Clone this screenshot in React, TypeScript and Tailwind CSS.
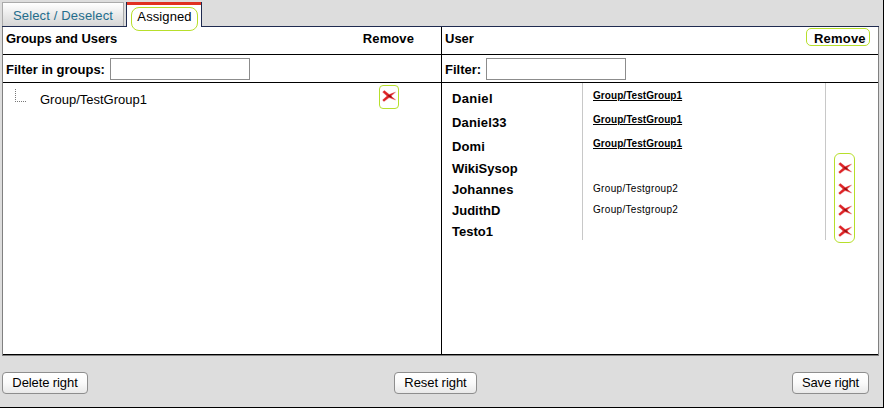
import React from 'react';

function RemoveIcon() {
  return (
    <svg width="14" height="12" viewBox="0 0 14 12" className="block shrink-0">
      <path d="M0 2.2 2.3 0 7.3 3.9 13.8 1.4 14 2.6 9.6 6.2 14 9.4 13.6 10.6 7.2 8.3 2 12 0 10 4.4 6Z" fill="#e99a9a" opacity="0.6" />
      <path d="M0.7 1.9 2.4 0.6 7.2 4.5 13.3 1.9 9 6.1 13.6 9.9 7.1 7.6 1.9 11.5 0.6 9.9 5 6Z" fill="#de2326" />
      <path d="M5.8 5 8.2 5.2 10.4 7.6 6.8 6.9Z" fill="#8f1012" />
    </svg>
  );
}

const users = [
  { name: 'Daniel', group: 'Group/TestGroup1', inherited: true, tracking: 'tracking-[0.3px]' },
  { name: 'Daniel33', group: 'Group/TestGroup1', inherited: true, tracking: 'tracking-[0.15px]' },
  { name: 'Domi', group: 'Group/TestGroup1', inherited: true, tracking: 'tracking-[0.1px]' },
  { name: 'WikiSysop', group: '', inherited: false, tracking: 'tracking-normal' },
  { name: 'Johannes', group: 'Group/Testgroup2', inherited: false, tracking: 'tracking-[0.1px]' },
  { name: 'JudithD', group: 'Group/Testgroup2', inherited: false, tracking: 'tracking-normal' },
  { name: 'Testo1', group: '', inherited: false, tracking: 'tracking-normal' },
];

function ActionButton({ label, size }: { label: string; size: string }) {
  return (
    <button
      className={`h-[22px] rounded-[4px] border border-[#8e8e8e] bg-linear-to-b from-white via-[#fafafa] to-[#e9e9e9] text-[13px] leading-[20px] text-black whitespace-nowrap ${size}`}
    >
      {label}
    </button>
  );
}

export default function App() {
  return (
    <div className="h-[410px] w-[885px] overflow-hidden bg-white font-['Liberation_Sans',Arial,sans-serif] text-[13px] text-black">
      <div className="h-[408px] w-[884px] border-r border-b border-black bg-[#dddddd] pl-[2px]">
        <div className="flex h-[27px] items-end">
          <div className="flex h-[27px] w-[124px] flex-col border-b border-[#1f2b50] pt-[2px]">
            <button className="h-[24px] w-[122px] border border-b-0 border-[#aaaaaa] bg-linear-to-b from-white to-[#d6d6d6] pt-[3px] pl-[10px] text-left leading-[18px] tracking-[0.15px] whitespace-nowrap text-[#246d8c]">
              Select / Deselect
            </button>
          </div>
          <button className="flex h-[25px] w-[76px] flex-col border-x border-[#1f2b50] bg-white">
            <span className="h-[3px] w-full shrink-0 bg-[#e03120]" />
            <span className="mt-[2px] ml-[4px] flex h-[24px] w-[67px] shrink-0 justify-center rounded-[8px] border border-[#b7df2b] leading-[17px] tracking-[0.1px]">
              Assigned
            </span>
          </button>
          <div className="h-full w-[677px] border-b border-[#1f2b50]" />
        </div>

        <div className="flex h-[329px] w-[877px] border-x border-b border-[#808080] bg-white">
          <section className="flex w-[439px] flex-col border-r border-b border-black">
            <header className="flex h-[28px] shrink-0 justify-between border-b border-black pt-[3px] pr-[27px] pl-[3px] leading-[18px] font-bold">
              <span className="tracking-[-0.1px]">Groups and Users</span>
              <span className="tracking-[0.1px]">Remove</span>
            </header>
            <div className="flex h-[28px] shrink-0 items-center border-b border-black pl-[3px] font-bold">
              <label className="w-[104px] pt-[2px] whitespace-nowrap">Filter in groups:</label>
              <input className="h-[22px] w-[140px] border border-[#8c8c8c] bg-white" />
            </div>
            <div className="flex pt-[2px] pl-[12px]">
              <span className="mt-[4px] h-[13px] w-[11px] border-b border-l border-dotted border-[#777777]" />
              <span className="mt-[6px] ml-[14px] w-[339px] leading-[18px]">Group/TestGroup1</span>
              <span className="flex h-[24px] w-[20px] justify-center rounded-[4px] border border-[#b7df2b] pt-[4px]">
                <RemoveIcon />
              </span>
            </div>
          </section>

          <section className="flex w-[436px] flex-col border-b border-black">
            <header className="flex h-[28px] shrink-0 justify-between border-b border-black pr-[8px] pl-[3px] leading-[18px] font-bold">
              <span className="pt-[3px]">User</span>
              <span className="mt-px h-[18px] w-[64px] rounded-[5px] border border-[#b7df2b] pt-px pl-[7px] tracking-[0.2px]">Remove</span>
            </header>
            <div className="flex h-[28px] shrink-0 items-center border-b border-black pl-[3px] font-bold">
              <label className="w-[41px] pt-[2px] whitespace-nowrap">Filter:</label>
              <input className="h-[22px] w-[140px] border border-[#8c8c8c] bg-white" />
            </div>
            <div className="flex h-[157px]">
              <div className="w-[141px] border-r border-[#c8c8c8] pt-[3px] pl-[10px] leading-[21px] font-bold">
                {users.map((user) => (
                  <div key={user.name} className={`${user.inherited ? 'h-[24px] pt-[2px]' : 'h-[21px]'} ${user.tracking}`}>
                    {user.name}
                  </div>
                ))}
              </div>
              <div className="w-[243px] border-r border-[#c8c8c8] pt-[3px] pl-[10px] text-[10px]">
                {users.map((user) => (
                  <div
                    key={user.name}
                    className={
                      user.inherited
                        ? 'h-[24px] pt-[3px] leading-[14px] font-bold tracking-[0.06px] underline'
                        : 'h-[21px] pt-[3px] leading-[14px] tracking-[0.32px]'
                    }
                  >
                    {user.group}
                  </div>
                ))}
              </div>
              <div className="mt-[70px] ml-[8px] flex h-[90px] w-[21px] flex-col items-center gap-[9px] rounded-[6px] border border-[#b7df2b] pt-[8px]">
                <RemoveIcon />
                <RemoveIcon />
                <RemoveIcon />
                <RemoveIcon />
              </div>
            </div>
          </section>
        </div>

        <footer className="flex w-[867px] items-start pt-[16px]">
          <ActionButton label="Delete right" size="w-[86px] tracking-[-0.1px]" />
          <div className="w-[306px]" />
          <ActionButton label="Reset right" size="w-[83px] tracking-[-0.05px]" />
          <div className="w-[315px]" />
          <ActionButton label="Save right" size="w-[77px] tracking-[-0.15px]" />
        </footer>
      </div>
    </div>
  );
}
